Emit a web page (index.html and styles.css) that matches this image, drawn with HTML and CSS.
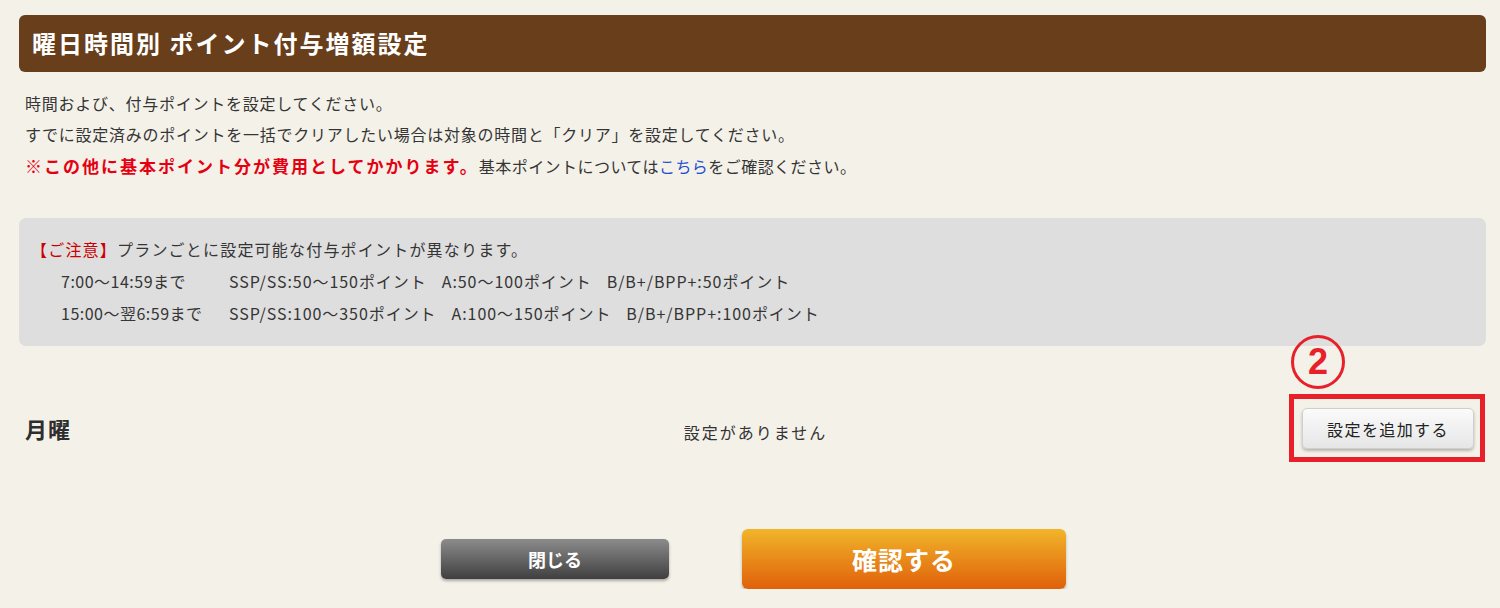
FILE: index.html
```html
<!DOCTYPE html>
<html lang="ja">
<head>
<meta charset="utf-8">
<title>曜日時間別 ポイント付与増額設定</title>
<link rel="stylesheet" href="styles.css">
</head>
<body>
<div class="page">
  <h1 class="title">曜日時間別 ポイント付与増額設定</h1>

  <div class="intro">
    <p>時間および、付与ポイントを設定してください。</p>
    <p>すでに設定済みのポイントを一括でクリアしたい場合は対象の時間と「クリア」を設定してください。</p>
    <p><strong class="warn">※この他に基本ポイント分が費用としてかかります。</strong><span class="tail">基本ポイントについては<a class="link" href="#">こちら</a>をご確認ください。</span></p>
  </div>

  <div class="notice">
    <p class="notice-head"><span class="notice-mark">【ご注意】</span>プランごとに設定可能な付与ポイントが異なります。</p>
    <p class="plan-row">
      <span class="plan-time">7:00～14:59まで</span>
      <span class="plan-seg">SSP/SS:50～150ポイント</span>
      <span class="plan-seg">A:50～100ポイント</span>
      <span class="plan-seg">B/B+/BPP+:50ポイント</span>
    </p>
    <p class="plan-row">
      <span class="plan-time">15:00～翌6:59まで</span>
      <span class="plan-seg">SSP/SS:100～350ポイント</span>
      <span class="plan-seg">A:100～150ポイント</span>
      <span class="plan-seg">B/B+/BPP+:100ポイント</span>
    </p>
  </div>

  <div class="day-row">
    <div class="day-label">月曜</div>
    <div class="day-message">設定がありません</div>
    <div class="day-action">
      <span class="anno-circle">2</span>
      <div class="anno-box">
        <button class="btn-add" type="button">設定を追加する</button>
      </div>
    </div>
  </div>

  <div class="footer-buttons">
    <button class="btn-close" type="button">閉じる</button>
    <button class="btn-confirm" type="button">確認する</button>
  </div>
</div>
</body>
</html>
```

FILE: styles.css
```css
* { box-sizing: border-box; }

html, body {
  margin: 0;
  padding: 0;
  background: #f4f1e9;
}

body {
  font-family: "Noto Sans CJK JP", "Noto Sans", sans-serif;
  color: #353535;
  font-size: 16px;
}

p { margin: 0; }

.page {
  width: 1500px;
  padding: 15px 14px 0 19px;
}

.title {
  margin: 0;
  height: 57px;
  line-height: 56px;
  padding-left: 13px;
  background: #683e1b;
  border-radius: 6px;
  color: #ffffff;
  font-size: 24px;
  font-weight: bold;
  letter-spacing: 2px;
}

.intro {
  margin-top: 16px;
  padding-left: 6px;
  line-height: 31px;
  letter-spacing: 0.75px;
}

.warn {
  color: #e50012;
  font-weight: bold;
  font-size: 17px;
  letter-spacing: 2px;
}

.tail { letter-spacing: 0.45px; }

.link {
  color: #1f4fd0;
  text-decoration: none;
}

.notice {
  margin-top: 36px;
  height: 128px;
  padding: 15px 12px 17px 12px;
  background: #dedede;
  border-radius: 7px;
  line-height: 32px;
}

.notice-head { letter-spacing: 1.2px; }

.notice-mark { color: #cc0000; }

.plan-row {
  display: flex;
  padding-left: 30px;
  letter-spacing: 0.5px;
}

.plan-time { width: 168px; }

.plan-seg { margin-right: 15px; letter-spacing: 0.95px; }

.day-row {
  margin-top: 48px;
  display: grid;
  grid-template-columns: 1fr auto 1fr;
  align-items: center;
  height: 68px;
}

.day-label {
  padding-left: 6px;
  padding-top: 0;
  font-size: 22px;
  font-weight: bold;
  letter-spacing: 1px;
  color: #2e2e2e;
}

.day-message {
  padding-top: 8px;
  padding-left: 6px;
  font-size: 16px;
  letter-spacing: 2px;
  color: #333;
}

.day-action {
  justify-self: end;
  margin-right: 1px;
  position: relative;
}

.anno-box {
  border: 5px solid #e8202a;
  width: 196px;
  height: 68px;
  padding: 9px 6px 0 8px;
}

.anno-circle {
  position: absolute;
  left: 2px;
  top: -59px;
  width: 54px;
  height: 54px;
  border: 3px solid #e8202a;
  border-radius: 50%;
  color: #e8202a;
  font-family: "Liberation Sans", Arial, sans-serif;
  font-weight: bold;
  font-size: 36px;
  line-height: 48px;
  text-align: center;
}

.btn-add {
  display: block;
  width: 172px;
  height: 41px;
  border: 1px solid #cfcfcf;
  border-radius: 5px;
  background: linear-gradient(#fbfbfb, #e6e6e6);
  box-shadow: 0 2px 3px rgba(0, 0, 0, 0.25);
  font-family: "Noto Sans CJK JP", sans-serif;
  font-size: 16px;
  color: #222;
  letter-spacing: 1.4px;
  cursor: pointer;
}

.footer-buttons {
  margin-top: 67px;
  display: flex;
  justify-content: center;
  align-items: center;
  gap: 73px;
  padding-left: 2px;
}

.btn-close {
  width: 228px;
  height: 40px;
  border: none;
  border-radius: 5px;
  background: linear-gradient(#8c8c8c, #3f3f3f);
  box-shadow: 0 2px 3px rgba(0, 0, 0, 0.3);
  color: #fff;
  font-family: "Noto Sans CJK JP", sans-serif;
  font-size: 18px;
  font-weight: bold;
  cursor: pointer;
}

.btn-confirm {
  width: 324px;
  height: 60px;
  border: none;
  border-radius: 6px;
  background: linear-gradient(#f1b52a, #e0600a);
  box-shadow: 0 2px 3px rgba(0, 0, 0, 0.25);
  color: #fff;
  font-family: "Noto Sans CJK JP", sans-serif;
  font-size: 25px;
  font-weight: bold;
  letter-spacing: 1px;
  cursor: pointer;
}
```
